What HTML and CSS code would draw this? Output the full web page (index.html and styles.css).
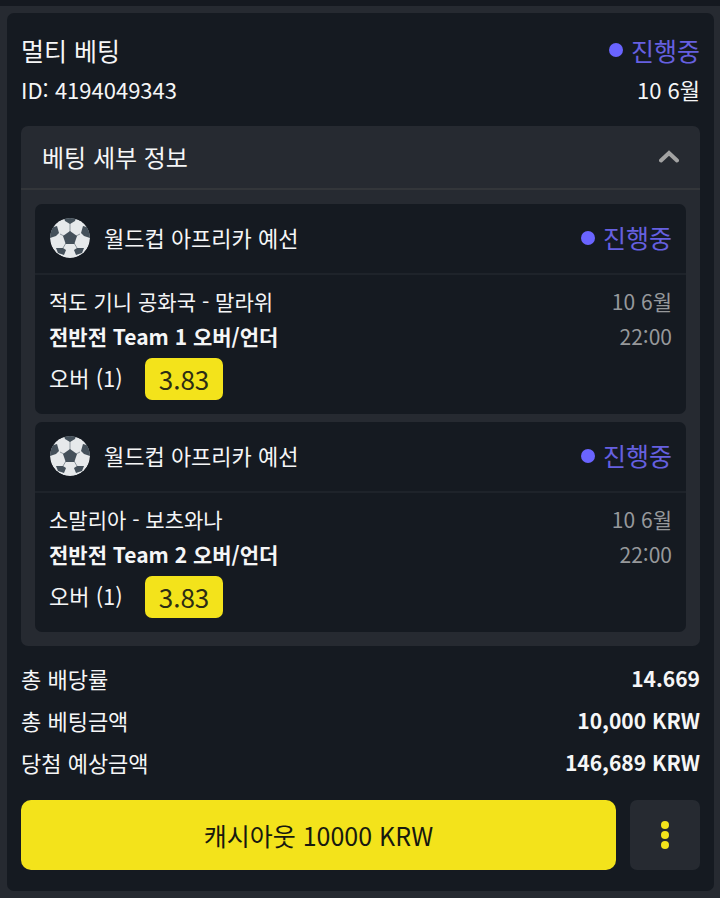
FILE: index.html
```html
<!DOCTYPE html>
<html lang="ko">
<head>
    <meta charset="UTF-8">
    <meta name="viewport" content="width=device-width, initial-scale=1.0">
    <title>멀티 베팅</title>
    <link rel="stylesheet" href="styles.css">
</head>
<body>
    <!-- Ball icon shared by the matches -->
    <svg class="symbols" width="0" height="0" aria-hidden="true">
        <symbol id="ball" viewBox="0 0 40 40">
            <clipPath id="ball-clip"><circle cx="20" cy="20" r="20"/></clipPath>
            <g clip-path="url(#ball-clip)">
                <circle cx="20" cy="20" r="20" fill="#e6e9eb"/>
                <path d="M20 14V5M26 18l4-2M24 25l3 5M16 25l-3 5M14 18l-4-2" fill="none" stroke="#8d969d" stroke-width="1"/>
                <g fill="#44505a">
                    <path d="M20 13l7 5-2.700 8h-8.600L13 18z"/>
                    <path d="M14 0h12l-1 3-5 3-5-3z"/>
                    <path d="M7 8l2 7-3 3-6 2V10z"/>
                    <path d="M33 8l-2 7 3 3 6 2V10z"/>
                    <path d="M6 30h7l3 2-2 5-6-2z"/>
                    <path d="M34 30h-7l-3 2 2 5 6-2z"/>
                </g>
            </g>
        </symbol>
    </svg>

    <div class="topbar"></div>

    <main class="bet-card">
        <header class="bet-header">
            <div class="row">
                <h1 class="title">멀티 베팅</h1>
                <span class="status">진행중</span>
            </div>
            <div class="row bet-id">
                <span>ID: 4194049343</span>
                <span>10 6월</span>
            </div>
        </header>

        <section class="details">
            <button class="details-toggle" type="button" aria-expanded="true">
                <span>베팅 세부 정보</span>
                <svg width="20" height="13" viewBox="0 0 20 13" aria-hidden="true">
                    <path d="M2 10.500l8-7.500 8 7.500" fill="none" stroke="#a3a3a3" stroke-width="4" stroke-linecap="round"/>
                </svg>
            </button>

            <div class="matches">
                <article class="match">
                    <div class="match-header">
                        <svg class="ball" aria-hidden="true"><use href="#ball"/></svg>
                        <h2 class="league">월드컵 아프리카 예선</h2>
                        <span class="status">진행중</span>
                    </div>
                    <div class="match-body">
                        <div class="row">
                            <span>적도 기니 공화국 - 말라위</span>
                            <span class="time">10 6월</span>
                        </div>
                        <div class="row">
                            <strong>전반전 Team 1 오버/언더</strong>
                            <span class="time">22:00</span>
                        </div>
                        <div class="pick">
                            <span>오버 (1)</span>
                            <span class="odds">3.83</span>
                        </div>
                    </div>
                </article>

                <article class="match">
                    <div class="match-header">
                        <svg class="ball" aria-hidden="true"><use href="#ball"/></svg>
                        <h2 class="league">월드컵 아프리카 예선</h2>
                        <span class="status">진행중</span>
                    </div>
                    <div class="match-body">
                        <div class="row">
                            <span>소말리아 - 보츠와나</span>
                            <span class="time">10 6월</span>
                        </div>
                        <div class="row">
                            <strong>전반전 Team 2 오버/언더</strong>
                            <span class="time">22:00</span>
                        </div>
                        <div class="pick">
                            <span>오버 (1)</span>
                            <span class="odds">3.83</span>
                        </div>
                    </div>
                </article>
            </div>
        </section>

        <dl class="totals">
            <div class="row"><dt>총 배당률</dt><dd>14.669</dd></div>
            <div class="row"><dt>총 베팅금액</dt><dd>10,000 KRW</dd></div>
            <div class="row"><dt>당첨 예상금액</dt><dd>146,689 KRW</dd></div>
        </dl>

        <div class="actions">
            <button class="cashout" type="button">캐시아웃 10000 KRW</button>
            <button class="more" type="button" aria-label="더보기">
                <svg width="8" height="28" viewBox="0 0 8 28" fill="#f3e31b" aria-hidden="true">
                    <circle cx="4" cy="4" r="4"/>
                    <circle cx="4" cy="14" r="4"/>
                    <circle cx="4" cy="24" r="4"/>
                </svg>
            </button>
        </div>
    </main>
</body>
</html>
```
FILE: styles.css
```css
* {
    box-sizing: border-box;
}

body {
    margin: 0;
    background-color: #262a31;
    color: #f5f6f7;
    font-family: "Noto Sans CJK KR", sans-serif;
    font-size: 21px;
    line-height: 35px;
}

h1, h2, dl, dd {
    margin: 0;
    font-weight: 400;
}

button {
    border: none;
    font-family: inherit;
    cursor: pointer;
}

.symbols {
    position: absolute;
}

.topbar {
    height: 6px;
    background-color: #151920;
}

.bet-card {
    margin: 7px 6px 7px 7px;
    padding: 18px 14px 21px;
    border-radius: 7px;
    background-color: #151a21;
}

.row {
    display: flex;
    justify-content: space-between;
}

.title,
.status {
    font-size: 25px;
}

.title {
    line-height: 38px;
}

.bet-id {
    font-size: 22px;
    line-height: 40px;
}

.status {
    display: flex;
    align-items: center;
    gap: 8px;
    color: #6660e0;
}

.status::before {
    content: '';
    width: 14px;
    height: 14px;
    border-radius: 50%;
    background-color: #6a64ff;
}

/* Bet details */
.details {
    margin-top: 17px;
    border-radius: 7px;
    background-color: #262a31;
}

.details-toggle {
    display: flex;
    justify-content: space-between;
    align-items: center;
    width: 100%;
    height: 64px;
    padding: 0 21px 2px;
    border-bottom: 2px solid #33363a;
    background: none;
    color: inherit;
    font-size: 24px;
}

.matches {
    display: flex;
    flex-direction: column;
    gap: 8px;
    padding: 14px;
}

.match {
    border-radius: 7px;
    background-color: #151a21;
}

.match-header {
    display: flex;
    align-items: center;
    gap: 14px;
    height: 71px;
    padding: 0 14px 2px 15px;
    border-bottom: 2px solid #1e232a;
}

.ball {
    width: 40px;
    height: 40px;
}

.league {
    flex: 1;
    font-size: 22px;
}

.match-body {
    padding: 9px 14px 14px;
}

.time {
    color: #96989b;
}

.pick {
    display: flex;
    gap: 22px;
    margin-top: 4px;
    font-size: 22px;
    line-height: 38px;
}

.odds {
    padding: 0 14px;
    border-radius: 7px;
    background-color: #f3e31b;
    color: #2c2c14;
    font-size: 26px;
    line-height: 42px;
}

/* Totals */
.totals {
    margin: 11px 0 17px;
    line-height: 42px;
}

.totals dt {
    font-size: 22px;
}

.totals dd {
    font-weight: 700;
}

.actions {
    display: flex;
    gap: 14px;
}

.cashout,
.more {
    height: 70px;
    border-radius: 10px;
}

.cashout {
    flex: 1;
    background-color: #f3e31b;
    color: #17190f;
    font-size: 25px;
}

.more {
    display: flex;
    align-items: center;
    justify-content: center;
    width: 70px;
    border-radius: 7px;
    background-color: #262a31;
}
```
